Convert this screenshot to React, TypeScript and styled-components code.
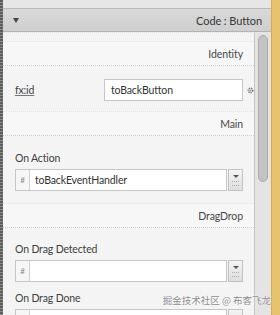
import React from 'react'
import styled, { createGlobalStyle } from 'styled-components'

const Global = createGlobalStyle`
  html, body { margin: 0; padding: 0; }
  body {
    width: 280px;
    height: 315px;
    overflow: hidden;
    background: #f3f3f3;
    font-family: Lato, "Liberation Sans", sans-serif;
  }
`

const Frame = styled.div`
  position: relative;
  display: flex;
  width: 280px;
  height: 315px;
  overflow: hidden;
`

const LeftEdge = styled.div`
  width: 3px;
  background: repeating-linear-gradient(180deg, #5e5e5e 0 2px, #8a8a8a 2px 3px);
`

const GoldEdge = styled.div`
  width: 8px;
  background: #e7c46c;
  border-left: 1px solid #d2ad55;
`

const Panel = styled.div`
  flex: 1;
  display: flex;
  flex-direction: column;
  min-width: 0;
`

const TopStrip = styled.div`
  height: 8px;
  background: #e6e6e6;
  border-bottom: 1px solid #b9b9b9;
`

const Header = styled.div`
  height: 22px;
  display: flex;
  align-items: center;
  justify-content: space-between;
  padding: 0 9px 0 10px;
  background: linear-gradient(180deg, #d9d9d9, #cfcfcf);
  border-bottom: 1px solid #b3b3b3;
  font-size: 11px;
  letter-spacing: -0.1px;
  color: #383838;
`

const Caret = styled.span`
  width: 0;
  height: 0;
  border-left: 3px solid transparent;
  border-right: 3px solid transparent;
  border-top: 5px solid #444;
  margin-top: 1px;
`

const Body = styled.div`
  flex: 1;
  display: flex;
  min-height: 0;
`

const Content = styled.div`
  flex: 1;
  background: #f4f4f4;
  border-right: 1px solid #c4c4c4;
  padding-top: 8px;
  border-top: 1px dotted #e0e0e0;
`

const Track = styled.div`
  width: 17px;
  background: #e4e4e4;
  padding: 3px 0 0 3px;
`

const Thumb = styled.div`
  width: 10px;
  height: 147px;
  border-radius: 5px;
  background: #c3c3c3;
  border: 1px solid #acacac;
  box-sizing: border-box;
`

const SectionTitle = styled.div`
  height: 23px;
  display: flex;
  align-items: center;
  justify-content: flex-end;
  padding-right: 11px;
  font-size: 10.5px;
  letter-spacing: -0.1px;
  color: #474747;
  background: #f7f7f7;
  border-top: 1px dotted #e2e2e2;
  border-bottom: 1px dotted #cfcfcf;
`

const Group = styled.div<{ $top: number; $bottom: number; $rowGap?: number }>`
  display: flex;
  flex-direction: column;
  gap: ${p => p.$rowGap ?? 0}px;
  padding: ${p => p.$top}px 0 ${p => p.$bottom}px 12px;
`

const InlineRow = styled.div`
  display: flex;
  align-items: center;
`

const Label = styled.div<{ $width?: number; $link?: boolean }>`
  width: ${p => (p.$width ? `${p.$width}px` : 'auto')};
  font-size: 10.5px;
  letter-spacing: -0.15px;
  line-height: 14px;
  color: #3f3f3f;
  text-decoration: ${p => (p.$link ? 'underline' : 'none')};
  text-decoration-color: #777;
`

const Field = styled.div`
  display: flex;
  flex-direction: column;
  gap: 4px;
`

const TextBox = styled.div<{ $width: number }>`
  width: ${p => p.$width}px;
  height: 22px;
  box-sizing: border-box;
  border: 1px solid #c6c6c6;
  background: #fff;
  display: flex;
  align-items: center;
  padding-left: 6px;
  font-size: 10.5px;
  letter-spacing: -0.15px;
  color: #333;
`

const Combo = styled.div`
  display: flex;
  align-items: stretch;
  height: 22px;
`

const ComboInput = styled.div`
  width: 212px;
  box-sizing: border-box;
  border: 1px solid #c6c6c6;
  background: #fff;
  display: flex;
  align-items: stretch;
  font-size: 10.5px;
  letter-spacing: -0.15px;
  color: #333;
`

const Hash = styled.span`
  width: 13px;
  border-right: 1px solid #d0d0d0;
  background: #f6f6f6;
  display: flex;
  align-items: center;
  justify-content: center;
  font-size: 8px;
  color: #8a8a8a;
`

const ComboText = styled.span`
  display: flex;
  align-items: center;
  padding-left: 5px;
`

const DropButton = styled.div`
  width: 15px;
  margin-left: 1px;
  box-sizing: border-box;
  border: 1px solid #c2c2c2;
  background: linear-gradient(180deg, #f4f4f4, #dedede);
  display: flex;
  flex-direction: column;
  align-items: center;
  justify-content: center;
  gap: 3px;
`

const DropArrow = styled.span`
  width: 0;
  height: 0;
  border-left: 3px solid transparent;
  border-right: 3px solid transparent;
  border-top: 3px solid #555;
`

const DropLines = styled.span`
  width: 7px;
  height: 3px;
  border-top: 1px dotted #aaa;
  border-bottom: 1px dotted #aaa;
`

const Gear = styled.svg`
  margin-left: 4px;
`

const Watermark = styled.div`
  position: absolute;
  right: 9px;
  bottom: 8px;
  font-family: "Noto Sans CJK SC", sans-serif;
  font-size: 9.5px;
  color: #8d8d8d;
  text-shadow: 0 0 2px #fff, 0 0 1px #fff;
`

const ComboField = ({ label, value }: { label: string; value?: string }) => (
  <Field>
    <Label>{label}</Label>
    <Combo>
      <ComboInput>
        <Hash>#</Hash>
        <ComboText>{value}</ComboText>
      </ComboInput>
      <DropButton>
        <DropArrow />
        <DropLines />
      </DropButton>
    </Combo>
  </Field>
)

const App = () => (
  <Frame>
    <Global />
    <LeftEdge />
    <Panel>
      <TopStrip />
      <Header>
        <Caret />
        <span>Code : Button</span>
      </Header>
      <Body>
        <Content>
          <SectionTitle>Identity</SectionTitle>
          <Group $top={13} $bottom={10}>
            <InlineRow>
              <Label $link $width={89}>fx:id</Label>
              <TextBox $width={139}>toBackButton</TextBox>
              <Gear width="7" height="7" viewBox="0 0 8 8">
                <circle cx="4" cy="4" r="2.6" fill="none" stroke="#777" strokeWidth="1.6" strokeDasharray="1.4 0.9" />
                <circle cx="4" cy="4" r="1.2" fill="#999" />
              </Gear>
            </InlineRow>
          </Group>
          <SectionTitle>Main</SectionTitle>
          <Group $top={15} $bottom={12}>
            <ComboField label="On Action" value="toBackEventHandler" />
          </Group>
          <SectionTitle>DragDrop</SectionTitle>
          <Group $top={14} $bottom={12} $rowGap={9}>
            <ComboField label="On Drag Detected" />
            <ComboField label="On Drag Done" />
          </Group>
        </Content>
        <Track>
          <Thumb />
        </Track>
      </Body>
    </Panel>
    <GoldEdge />
    <Watermark>掘金技术社区 @ 布客飞龙</Watermark>
  </Frame>
)

export default App
